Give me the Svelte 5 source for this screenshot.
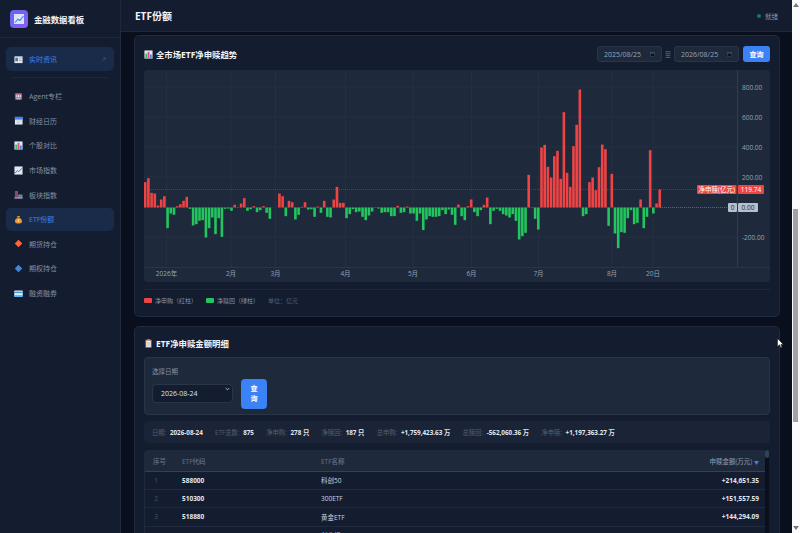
<script lang="ts">
  type NavItem = { label: string; icon: string; active?: boolean };

  const nav: NavItem[] = [
    { label: 'Agent专栏', icon: 'robot' },
    { label: '财经日历', icon: 'calendar' },
    { label: '个股对比', icon: 'bars' },
    { label: '市场指数', icon: 'trend' },
    { label: '板块指数', icon: 'city' },
    { label: 'ETF份额', icon: 'bag', active: true },
    { label: '期货持仓', icon: 'orange' },
    { label: '期权持仓', icon: 'blue' },
    { label: '融资融券', icon: 'card' }
  ];

  // net flow per trading day, in thirds of a chart pixel
  const flows = [
    76, 88, 44, 42, 6, 24, 34, -62, -18, -22, 4, 10, 20, 32, -4, -54, -50, -40, -38, -90, -62, -30, -80, -32, -88,
    -4, -3, -10, 8, 1, 12, 28, -10, -5, 4, -14, -8, 4, -16, -34, 0, 0, 42, 34, -26, 20, 16, -36, -22, 2, 16, -6, -5,
    -28, 3, -16, 20, -28, -30, 24, 62, 14, 14, -32, -20, -5, -14, -12, -28, -38, -24, -12, 1, -3, -16, -14, -14, -26,
    -26, 5, -16, -14, 3, -18, -18, -40, -18, -68, -36, -26, -28, -28, -26, -8, -20, -6, -22, -52, 9, -26, -38, 4, 24,
    -14, -26, -8, 8, 30, -50, -10, -4, -10, -20, -24, -30, -20, -40, -96, -86, -76, 98, -1, -34, -66, 180, 188, 122,
    90, 154, 170, 86, 286, 104, 62, 184, 248, 354, -26, -20, 76, 90, 52, 121, 189, 175, -55, 101, -78, -122, -74, -76,
    -32, -8, -50, -46, 24, -62, -28, 172, -18, 12, 54
  ];

  const zeroY = 207.5;
  const yTicks = [
    { y: 87, label: '800.00' },
    { y: 117, label: '600.00' },
    { y: 147, label: '400.00' },
    { y: 177, label: '200.00' },
    { y: 237, label: '-200.00' }
  ];
  const xTicks = [
    { x: 166.5, label: '2026年' },
    { x: 231, label: '2月' },
    { x: 275.5, label: '3月' },
    { x: 345.5, label: '4月' },
    { x: 413, label: '5月' },
    { x: 471.5, label: '6月' },
    { x: 538.5, label: '7月' },
    { x: 612, label: '8月' },
    { x: 653, label: '20日' }
  ];

  const stats = [
    ['日期:', '2026-08-24'],
    ['ETF总数:', '875'],
    ['净申购:', '278 只'],
    ['净赎回:', '187 只'],
    ['总申购:', '+1,759,423.63 万'],
    ['总赎回:', '-562,060.36 万'],
    ['净申赎:', '+1,197,363.27 万']
  ];

  const rows = [
    { no: 1, code: '588000', name: '科创50', amount: '+214,651.35' },
    { no: 2, code: '510300', name: '300ETF', amount: '+151,557.59' },
    { no: 3, code: '518880', name: '黄金ETF', amount: '+144,294.09' },
    { no: 4, code: '159915', name: '创业板ETF', amount: '+126,402.18' }
  ];
</script>

{#snippet icon(name: string)}
  <svg class="icon" viewBox="0 0 10 10">
    {#if name === 'news'}
      <rect x="0.5" y="1.5" width="9" height="7.5" fill="#e2e8f0" />
      <rect x="1.5" y="3" width="3" height="4" fill="#64748b" />
      <rect x="5.5" y="3" width="3" height="1" fill="#94a3b8" />
      <rect x="5.5" y="5.5" width="3" height="1" fill="#94a3b8" />
    {:else if name === 'robot'}
      <rect x="1" y="1" width="8" height="8" rx="1.5" fill="#a8486a" />
      <rect x="2" y="3" width="6" height="3" fill="#e2e8f0" />
      <rect x="3" y="3.8" width="1.2" height="1.2" fill="#312e81" />
      <rect x="5.8" y="3.8" width="1.2" height="1.2" fill="#312e81" />
      <rect x="2.5" y="7" width="5" height="1" fill="#cbd5e1" />
    {:else if name === 'calendar'}
      <rect x="1" y="1" width="8.5" height="8.5" fill="#e2e8f0" />
      <rect x="1" y="1" width="8.5" height="3" fill="#3b82f6" />
      <path d="M3 5.5h1M5 5.5h1M7 5.5h1M3 7.5h1M5 7.5h1" stroke="#94a3b8" stroke-width="0.8" />
    {:else if name === 'bars'}
      <rect x="0.5" y="0.5" width="9" height="9" fill="#e2e8f0" />
      <rect x="1.5" y="4" width="2" height="5" fill="#22c55e" />
      <rect x="4" y="2" width="2" height="7" fill="#ef4477" />
      <rect x="6.5" y="5" width="2" height="4" fill="#3b82f6" />
    {:else if name === 'trend'}
      <rect x="0.5" y="0.5" width="9" height="9" fill="#e2e8f0" />
      <path d="M1.2 7.8 3.6 5.2 5.4 6.2 8.8 2.4" fill="none" stroke="#3b82f6" stroke-width="1.1" />
    {:else if name === 'city'}
      <rect x="1" y="1" width="3.5" height="8.5" fill="#8a4a6b" />
      <rect x="4.5" y="5" width="5" height="4.5" fill="#64748b" />
      <rect x="0.5" y="8" width="9" height="1.5" fill="#a78bca" />
      <path d="M5.5 6.2h1M7.5 6.2h1" stroke="#93c5fd" stroke-width="0.8" />
    {:else if name === 'bag'}
      <path d="M3.4 1h3.2L6 3c2 .8 3 2.6 3 4 0 1.8-1.6 2.5-4 2.5S1 8.8 1 7c0-1.4 1-3.2 3-4Z" fill="#e8943a" />
      <rect x="3.5" y="2.7" width="3" height="0.8" fill="#92400e" />
      <rect x="4.3" y="4.8" width="1.4" height="3" fill="#fde68a" />
    {:else if name === 'orange'}
      <path d="M5 0.8 9.2 5 5 9.2 0.8 5Z" fill="#f9673f" />
    {:else if name === 'blue'}
      <path d="M5 0.8 9.2 5 5 9.2 0.8 5Z" fill="#3b86e0" />
    {:else if name === 'card'}
      <rect x="0.3" y="1.8" width="9.4" height="6.8" rx="0.8" fill="#dbeafe" />
      <rect x="0.3" y="3" width="9.4" height="1.5" fill="#3b9ad9" />
      <rect x="0.3" y="6.8" width="9.4" height="1.8" fill="#38bdf8" />
    {:else if name === 'clipboard'}
      <rect x="1.5" y="0.8" width="7" height="8.8" rx="0.5" fill="#b5764a" />
      <rect x="2.5" y="2" width="5" height="6.8" fill="#f1f5f9" />
      <path d="M3.3 4h3.4M3.3 5.5h3.4M3.3 7h3.4" stroke="#94a3b8" stroke-width="0.6" />
      <rect x="3.5" y="0.3" width="3" height="1.4" fill="#94a3b8" />
    {/if}
  </svg>
{/snippet}

{#snippet calendarGlyph()}
  <svg viewBox="0 0 6 6">
    <rect x="0.5" y="0.5" width="5" height="5" fill="#0b1120" stroke="#475569" stroke-width="0.6" />
    <rect x="0.5" y="0.5" width="5" height="1.4" fill="#475569" />
  </svg>
{/snippet}

<div class="page">
  <aside class="sidebar">
    <div class="brand">
      <div class="logo">
        <svg viewBox="0 0 18 18" width="18" height="18">
          <rect x="4" y="4" width="10" height="10" fill="#dbe4f5" />
          <path d="M5 12.5 8 9.2 10 10.5 13.5 6" fill="none" stroke="#3b82f6" stroke-width="1.1" />
        </svg>
      </div>
      <span class="brand-name">金融数据看板</span>
    </div>
    <nav>
      <a class="nav-item live">
        {@render icon('news')}
        <span>实时资讯</span>
        <svg class="ext" viewBox="0 0 6 6"><path d="M1 5 5 1M2.5 1H5V3.5" fill="none" stroke="#3b5f96" stroke-width="0.7" /></svg>
      </a>
      <div class="divider"></div>
      {#each nav as item}
        <a class="nav-item" class:active={item.active}>
          {@render icon(item.icon)}
          <span>{item.label}</span>
        </a>
      {/each}
    </nav>
  </aside>

  <div class="main">
    <header>
      <h1>ETF份额</h1>
      <div class="status"><i></i>就绪</div>
    </header>

    <div class="content">
      <section class="card trend">
        <div class="card-head">
          <h2>{@render icon('bars')}全市场ETF净申赎趋势</h2>
          <div class="range">
            <div class="date">2025/08/25{@render calendarGlyph()}</div>
            <span class="to">至</span>
            <div class="date">2026/08/25{@render calendarGlyph()}</div>
            <button class="query">查询</button>
          </div>
        </div>

        <svg class="chart" viewBox="144 70 626 212" width="626" height="212">
          <rect x="144" y="70" width="626" height="212" rx="3" fill="#1e293b" />
          {#each yTicks as t}
            <line x1="144" x2="737" y1={t.y} y2={t.y} stroke="#263244" stroke-width="0.8" />
          {/each}
          <line x1="144" x2="737" y1="207.5" y2="207.5" stroke="#263244" stroke-width="0.8" />
          {#each xTicks as t}
            <line x1={t.x} x2={t.x} y1="70" y2="267" stroke="#263244" stroke-width="0.8" />
          {/each}
          <line x1="144" x2="770" y1="267.5" y2="267.5" stroke="#2c384b" stroke-width="0.8" />
          <line x1="737.5" x2="737.5" y1="70" y2="267" stroke="#334155" stroke-width="0.8" />

          {#each flows as h, i}
            <rect
              x={143.9 + i * 3.196}
              y={h >= 0 ? zeroY - h / 3 : zeroY}
              width="2.6"
              height={Math.abs(h) / 3}
              fill={h >= 0 ? '#ef4444' : '#22c55e'}
            />
          {/each}

          <line x1="147" x2="697" y1="189.5" y2="189.5" stroke="#ef4444" stroke-opacity="0.6" stroke-width="0.7" stroke-dasharray="1 1" />
          <line x1="660" x2="728" y1="207.5" y2="207.5" stroke="#94a3b8" stroke-opacity="0.6" stroke-width="0.7" stroke-dasharray="1 1" />

          {#each yTicks as t}
            <text class="tick" x="742" y={t.y + 2.5}>{t.label}</text>
          {/each}
          {#each xTicks as t}
            <text class="tick" x={t.x} y="276" text-anchor="middle">{t.label}</text>
          {/each}

          <rect x="697" y="185" width="39.5" height="9" rx="1" fill="#ef4444" />
          <text class="flag" x="716.7" y="192" text-anchor="middle">净申赎(亿元)</text>
          <rect x="738" y="185" width="26" height="9" rx="1" fill="#ef4444" />
          <text class="flag" x="751" y="192" text-anchor="middle">119.74</text>

          <rect x="728" y="203" width="9" height="9" rx="1" fill="#b6bfcc" />
          <text class="flag dark" x="732.5" y="210" text-anchor="middle">0</text>
          <rect x="738" y="203" width="20" height="9" rx="1" fill="#b6bfcc" />
          <text class="flag dark" x="748" y="210" text-anchor="middle">0.00</text>
        </svg>

        <div class="legend">
          <span><i class="red"></i>净申购（红柱）</span>
          <span><i class="green"></i>净赎回（绿柱）</span>
          <span class="unit">单位：亿元</span>
        </div>
      </section>

      <section class="card detail">
        <h2>{@render icon('clipboard')}ETF净申赎金额明细</h2>

        <div class="filter">
          <label for="trade-date">选择日期</label>
          <div class="filter-row">
            <div class="select-box">
              <select id="trade-date"><option>2026-08-24</option></select>
              <svg viewBox="0 0 6 4"><path d="M0.8 0.8 3 3 5.2 0.8" fill="none" stroke="#cbd5e1" stroke-width="1" /></svg>
            </div>
            <button class="query tall">查询</button>
          </div>
        </div>

        <div class="stats">
          {#each stats as [label, value]}
            <span>{label} <b>{value}</b></span>
          {/each}
        </div>

        <div class="table-wrap">
          <table>
            <thead>
              <tr>
                <th class="no">序号</th>
                <th class="code">ETF代码</th>
                <th class="name">ETF名称</th>
                <th class="amount">申赎金额(万元) <em>▼</em></th>
              </tr>
            </thead>
            <tbody>
              {#each rows as row}
                <tr>
                  <td class="no">{row.no}</td>
                  <td class="code"><b>{row.code}</b></td>
                  <td class="name">{row.name}</td>
                  <td class="amount"><b>{row.amount}</b></td>
                </tr>
              {/each}
            </tbody>
          </table>
          <div class="mini-bar"><i></i></div>
        </div>
      </section>
    </div>
  </div>

  <div class="scrollbar">
    <span class="arrow up"></span>
    <span class="thumb"></span>
    <span class="arrow down"></span>
  </div>

  <svg class="cursor" viewBox="0 0 7 11" width="7" height="11">
    <path d="M0.5 0.5V8.5L2.5 6.8 3.8 9.8 5 9.2 3.8 6.4H6.3Z" fill="#fff" stroke="#111" stroke-width="0.5" />
  </svg>
</div>

<style>
  :global(body) {
    margin: 0;
    background: #0a0f1e;
  }

  .page {
    position: relative;
    display: flex;
    height: 533px;
    overflow: hidden;
    background: #0a0f1e;
    color: #e2e8f0;
    font-family: 'Open Sans', 'Noto Sans CJK SC', sans-serif;
  }

  .icon {
    width: 9px;
    height: 9px;
    flex: none;
  }

  .sidebar {
    width: 120px;
    flex: none;
    background: #141c2f;
    border-right: 1px solid #1e293b;
  }

  .brand {
    display: flex;
    align-items: center;
    gap: 6px;
    height: 38px;
    padding-left: 10px;
    box-sizing: border-box;
    border-bottom: 1px solid #1e293b;
  }

  .logo {
    width: 18px;
    height: 18px;
    border-radius: 4px;
    background: linear-gradient(135deg, #6366f1, #8b5cf6);
  }

  .brand-name {
    font-size: 8.4px;
    font-weight: 700;
    color: #f1f5f9;
  }

  nav {
    display: flex;
    flex-direction: column;
    padding: 9px 6px 0;
  }

  .nav-item {
    display: flex;
    align-items: center;
    gap: 6px;
    height: 24.6px;
    padding-left: 8px;
    border-radius: 5px;
    font-size: 7px;
    color: #8492a6;
  }

  .nav-item.live {
    height: 24px;
    background: #1a2b4a;
    color: #3b82f6;
  }

  .ext {
    width: 5px;
    height: 5px;
    margin-left: auto;
    margin-right: 8px;
  }

  .nav-item.active {
    height: 23px;
    margin: 0.8px 0;
    background: #1a2b4a;
    color: #3b82f6;
  }

  .divider {
    height: 1px;
    margin: 6px 7px;
    background: #1e293b;
  }

  .main {
    flex: 1;
    min-width: 0;
    display: flex;
    flex-direction: column;
  }

  header {
    display: flex;
    align-items: center;
    justify-content: space-between;
    height: 32px;
    flex: none;
    padding: 0 14px;
    background: #141c2f;
    border-bottom: 1px solid #1e293b;
    box-sizing: border-box;
  }

  h1 {
    margin: 0;
    font-size: 10px;
    font-weight: 700;
    color: #f1f5f9;
  }

  .status {
    display: flex;
    align-items: center;
    gap: 4px;
    font-size: 6.5px;
    color: #8492a6;
  }

  .status i {
    width: 4px;
    height: 4px;
    border-radius: 50%;
    background: #0f7a5c;
  }

  .content {
    display: flex;
    flex-direction: column;
    gap: 9px;
    padding: 3px 12px 0 13px;
  }

  .card {
    background: #141c2f;
    border: 1px solid #1f2a3e;
    border-radius: 5px;
    box-sizing: border-box;
    padding: 0 9px;
  }

  .trend {
    height: 282px;
  }

  .detail {
    flex: none;
    height: 260px;
  }

  .card-head {
    display: flex;
    align-items: center;
    justify-content: space-between;
    height: 34px;
    padding-top: 2px;
    box-sizing: border-box;
  }

  h2 {
    display: flex;
    align-items: center;
    gap: 3px;
    margin: 0;
    font-size: 8.4px;
    font-weight: 700;
    color: #f1f5f9;
  }

  .range {
    display: flex;
    align-items: center;
    gap: 4px;
  }

  .date {
    display: flex;
    align-items: center;
    justify-content: space-between;
    width: 65px;
    height: 16px;
    box-sizing: border-box;
    padding: 0 6px;
    background: #1e293b;
    border: 1px solid #2a3648;
    border-radius: 3px;
    font-size: 7px;
    color: #94a3b8;
  }

  .date svg {
    width: 5px;
    height: 5px;
  }

  .to {
    font-size: 6.5px;
    color: #64748b;
    margin: 0 -1.2px;
  }

  .query {
    width: 27px;
    height: 16px;
    padding: 0;
    border: none;
    border-radius: 3px;
    background: #3b82f6;
    color: #fff;
    font-family: inherit;
    font-size: 7px;
    font-weight: 700;
  }

  .chart {
    display: block;
  }

  .tick {
    font-size: 6.5px;
    fill: #94a3b8;
  }

  .flag {
    font-size: 6.5px;
    fill: #fff;
  }

  .flag.dark {
    fill: #1e293b;
  }

  .legend {
    display: flex;
    align-items: center;
    gap: 9px;
    margin-top: 7px;
    padding-top: 6px;
    border-top: 1px solid #1e293b;
    font-size: 6px;
    color: #8492a6;
  }

  .legend span {
    display: flex;
    align-items: center;
    gap: 3px;
  }

  .legend i {
    width: 8px;
    height: 5px;
    border-radius: 1px;
  }

  .legend .red {
    background: #ef4444;
  }

  .legend .green {
    background: #22c55e;
  }

  .legend .unit {
    color: #526074;
  }

  .detail h2 {
    height: 30px;
    box-sizing: border-box;
    padding-top: 2px;
  }

  .filter {
    height: 58px;
    box-sizing: border-box;
    padding: 8px 7px 0;
    background: #1e293b;
    border: 1px solid #2a3648;
    border-radius: 4px;
  }

  .filter label {
    display: block;
    margin-bottom: 3px;
    font-size: 6.5px;
    color: #8492a6;
  }

  .filter-row {
    display: flex;
    align-items: flex-start;
    gap: 8px;
  }

  .select-box {
    position: relative;
    width: 81px;
    height: 19px;
  }

  .select-box svg {
    position: absolute;
    top: 8px;
    right: 3px;
    width: 5px;
    height: 4px;
    pointer-events: none;
  }

  select {
    width: 100%;
    height: 100%;
    appearance: none;
    padding: 0 8px;
    background: #141c2f;
    border: 1px solid #2a3648;
    border-radius: 4px;
    color: #dbe2ec;
    font-family: inherit;
    font-size: 7px;
  }

  .query.tall {
    width: 26px;
    height: 30px;
    line-height: 10px;
    padding: 0 8px;
    border-radius: 4px;
  }

  .stats {
    display: flex;
    align-items: center;
    gap: 12.3px;
    height: 22px;
    margin-top: 6px;
    padding: 0 8px;
    background: #1a2436;
    border-radius: 4px;
    font-size: 6.3px;
    color: #526074;
  }

  .stats b {
    margin-left: 2px;
    color: #e2e8f0;
    font-weight: 700;
  }

  .table-wrap {
    position: relative;
    margin-top: 7px;
    margin-right: 4px;
    border: 1px solid #1f2a3e;
    border-bottom: none;
    border-radius: 4px 0 0 0;
  }

  table {
    width: 100%;
    border-collapse: collapse;
    table-layout: fixed;
    font-size: 6.5px;
    color: #94a3b8;
  }

  th {
    height: 20px;
    padding: 0 7px;
    box-sizing: border-box;
    text-align: left;
    font-weight: 500;
    color: #64748b;
    background: #1e293b;
    border-bottom: 1px solid #334155;
  }

  td {
    height: 18.4px;
    padding: 0 7px;
    border-bottom: 1px solid #1f2a3e;
    box-sizing: border-box;
    color: #cbd5e1;
  }

  td b {
    color: #e2e8f0;
    font-weight: 700;
  }

  .no {
    width: 30px;
    padding-left: 8px;
  }

  td.no {
    padding: 0 8px 0 0;
    text-align: center;
    color: #475569;
  }

  .code {
    width: 139px;
  }

  .amount {
    text-align: right;
    padding-right: 6px;
  }

  th.amount {
    color: #8492a6;
  }

  em {
    font-style: normal;
    font-size: 5px;
    color: #3b82f6;
  }

  .mini-bar {
    position: absolute;
    top: -1px;
    right: -4px;
    bottom: 0;
    width: 4px;
    background: #0a0f1e;
  }

  .mini-bar i {
    display: block;
    height: 8px;
    border-radius: 2px;
    background: #334155;
  }

  .scrollbar {
    position: relative;
    width: 8px;
    flex: none;
    background: #fbfbfb;
  }

  .thumb {
    position: absolute;
    top: 209px;
    left: 1px;
    width: 5px;
    height: 213px;
    background: #a3a3a3;
  }

  .arrow {
    position: absolute;
    left: 1px;
    width: 0;
    height: 0;
    border: 3px solid transparent;
  }

  .arrow.up {
    top: 0;
    border-bottom: 4px solid #7a7a7a;
  }

  .arrow.down {
    bottom: 0;
    border-top: 4px solid #7a7a7a;
  }

  .cursor {
    position: absolute;
    left: 777px;
    top: 338px;
  }
</style>
